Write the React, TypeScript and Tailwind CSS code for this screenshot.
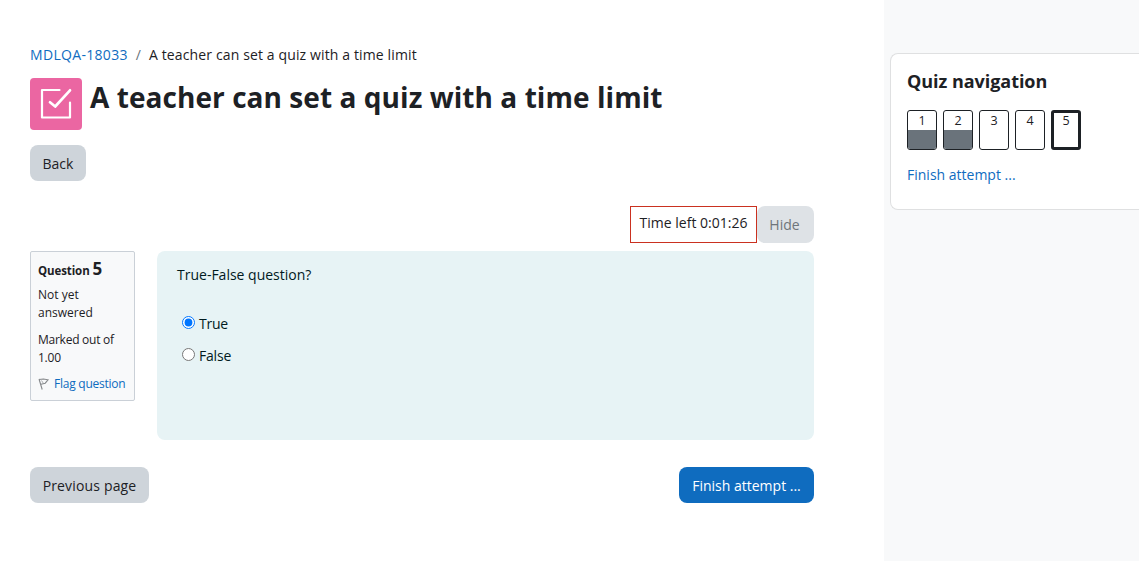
import { useState } from 'react';

interface NavButton {
    id: number;
    answered: boolean;
}

const navButtons: NavButton[] = [
    { id: 1, answered: true },
    { id: 2, answered: true },
    { id: 3, answered: false },
    { id: 4, answered: false },
    { id: 5, answered: false },
];

const title = 'A teacher can set a quiz with a time limit';

function QuizIcon() {
    return (
        <svg width="32" height="32" viewBox="0 0 32 32" fill="none" stroke="white" strokeWidth="2.2" strokeLinecap="round" strokeLinejoin="round">
            <path d="M19.500 2H2v27.500h28V14.500" />
            <path d="M10 14.300l5.200 4.200L30 2.300" strokeWidth="2.700" />
        </svg>
    );
}

function FlagIcon() {
    return (
        <svg width="12" height="12" viewBox="0 0 12 12" fill="none" stroke="#85888b" strokeWidth="1.100">
            <path d="M1 1l3.200 10.500M1 1.500L5.500 1l4.500.8-2.800 3.400L3 6.200" />
            <path d="M3.500 2.500L5.200 5" strokeWidth=".7" />
        </svg>
    );
}

function QuestionInfo() {
    return (
        <div className="h-[150px] w-[105px] shrink-0 rounded-[2px] border border-[#cad0d7] bg-[#f8f9fa] px-[7px] text-[12px] leading-[18px]">
            <h3 className="mt-[5px] h-[24px] whitespace-nowrap text-[11.5px] leading-[24px] font-bold tracking-[-0.1px]">
                Question <span className="text-[17px]">5</span>
            </h3>
            <div className="mt-[5px]">Not yet answered</div>
            <div className="mt-[9px] whitespace-nowrap tracking-[-0.25px]">Marked out of<br />1.00</div>
            <a href="#" className="mt-[8px] flex items-center whitespace-nowrap text-[#0f6cbf]">
                <FlagIcon />
                <span className="ml-[4px] tracking-[-0.24px]">Flag question</span>
            </a>
        </div>
    );
}

export default function App() {
    const [answer, setAnswer] = useState('true');

    return (
        <div className="flex h-[561px] w-full overflow-hidden bg-white font-['Open_Sans','Noto_Sans',sans-serif] text-[14px] leading-[22px] text-[#1d2125]">
            <main className="w-[884px] shrink-0 pr-[70px] pl-[30px]">
                {/* Breadcrumb */}
                <nav className="mt-[44px] flex h-[22px] whitespace-nowrap">
                    <a href="#" className="tracking-[0.32px] text-[#0f6cbf]">MDLQA-18033</a>
                    <span className="mx-[8px] text-[#6a737b]">/</span>
                    <span className="tracking-[0.13px]">{title}</span>
                </nav>

                {/* Activity header */}
                <header className="mt-[12px] flex h-[52px]">
                    <div className="flex size-[52px] shrink-0 items-center justify-center rounded-[4px] bg-[#eb66a2]">
                        <QuizIcon />
                    </div>
                    <h1 className="ml-[8px] whitespace-nowrap text-[28px] leading-[38px] font-bold tracking-[0.06px]">{title}</h1>
                </header>

                <button className="mt-[15px] block h-[36px] w-[56px] rounded-[8px] bg-[#ced4da] pt-[2px]">Back</button>

                {/* Timer */}
                <div className="mt-[25px] flex h-[37px] justify-end">
                    <div className="w-[127px] border border-[#ca3120] pt-[5px] text-center whitespace-nowrap">Time left 0:01:26</div>
                    <button className="w-[57px] rounded-[8px] bg-[#dee2e6] pr-[2px] text-[#6f757a]">Hide</button>
                </div>

                {/* Question */}
                <section className="mt-[8px] flex">
                    <QuestionInfo />
                    <div className="ml-[22px] h-[189px] flex-1 rounded-[8px] bg-[#e7f3f5] pt-[13px] pl-[20px] text-[#001a1e]">
                        <p>True-False question?</p>
                        <div className="mt-[22px] ml-[5px]">
                            <label className="flex h-[32px] items-center tracking-[-0.25px]">
                                <input type="radio" name="answer" className="mr-[4px] -mt-[3px] size-[13px]" checked={answer === 'true'} onChange={() => setAnswer('true')} />
                                True
                            </label>
                            <label className="flex h-[32px] items-center tracking-[-0.2px]">
                                <input type="radio" name="answer" className="mr-[4px] -mt-[3px] size-[13px]" checked={answer === 'false'} onChange={() => setAnswer('false')} />
                                False
                            </label>
                        </div>
                    </div>
                </section>

                <div className="mt-[27px] flex h-[36px] justify-between">
                    <button className="w-[119px] rounded-[8px] bg-[#ced4da] pt-[2px] tracking-[0.16px] whitespace-nowrap">Previous page</button>
                    <button className="w-[135px] rounded-[8px] bg-[#0f6cbf] pt-[2px] whitespace-nowrap text-white">Finish attempt ...</button>
                </div>
            </main>

            <aside className="flex-1 bg-[#f8f9fa] pt-[53px] pl-[6px]">
                <section className="h-[157px] rounded-l-[8px] border border-r-0 border-[#dfe0e1] bg-white pl-[16px]">
                    <h2 className="mt-[15px] h-[24px] text-[18px] leading-[24px] font-bold tracking-[-0.04px]">Quiz navigation</h2>
                    <div className="mt-[17px] flex gap-[6px]">
                        {navButtons.map((item) => (
                            <a
                                key={item.id}
                                href="#"
                                className={`flex h-[40px] w-[30px] flex-col overflow-hidden rounded-[3px] border-[#1d2125] text-center text-[12.5px] ${item.id === 5 ? 'border-3' : 'border'}`}
                            >
                                <span className={`leading-[19px] ${item.id === 5 ? '-mt-[2px]' : ''}`}>{item.id}</span>
                                {item.answered && <span className="flex-1 bg-[#6a737b]" />}
                            </a>
                        ))}
                    </div>
                    <a href="#" className="mt-[14px] block w-fit text-[#0f6cbf]">Finish attempt ...</a>
                </section>
            </aside>
        </div>
    );
}
